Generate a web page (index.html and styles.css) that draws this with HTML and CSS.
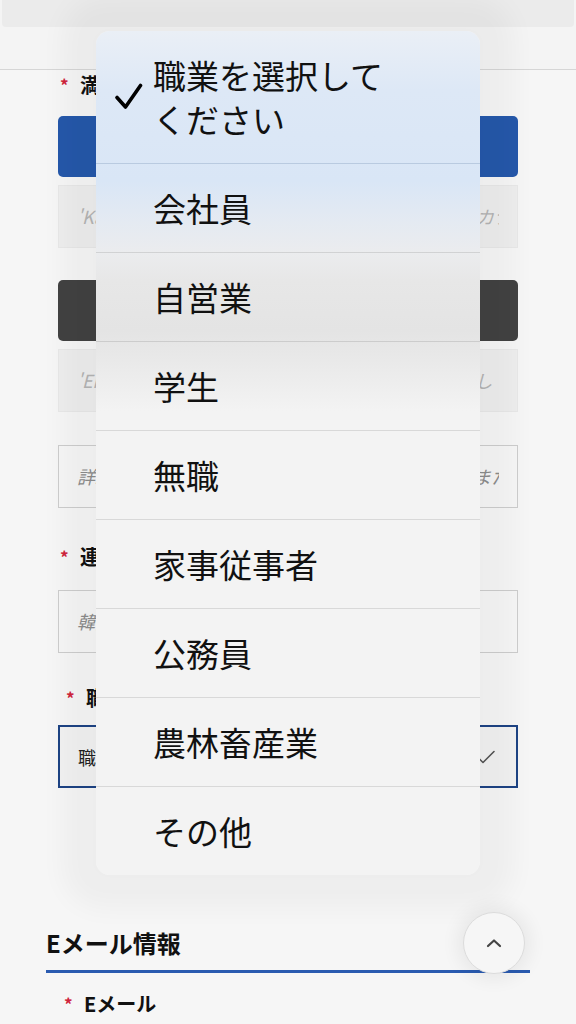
FILE: index.html
```html
<!DOCTYPE html>
<html lang="ja">
  <head>
    <meta charset="UTF-8" />
    <meta name="viewport" content="width=device-width, initial-scale=1.0" />
    <title>会員情報入力</title>
    <link rel="stylesheet" href="styles.css">
  </head>

  <body>
    <header class="top-bar">
      <div class="top-strip"></div>
    </header>

    <main class="form">
      <div class="field-label first"><span class="req">*</span>満年齢・住所</div>
      <button class="btn btn-blue" type="button">郵便番号から住所を検索</button>
      <div class="input input-readonly"><span>'Kana' 全角カタカナで住所を検索後に自動でカタカナ入力</span></div>
      <button class="btn btn-dark" type="button">英文住所に変換</button>
      <div class="input input-readonly"><span>'English' 英文住所が自動で入力されます。変更なし</span></div>
      <div class="input input-line"><span>詳細住所（番地・建物名・部屋番号）を入力し、または</span></div>

      <div class="field-label mid"><span class="req">*</span>連絡先電話番号</div>
      <div class="input input-line line-2"><span>韓国の電話番号を入力してください</span></div>

      <div class="field-label job"><span class="req">*</span>職業</div>
      <div class="select">
        <span>職業を選択してください</span>
        <svg class="select-check" width="18" height="14" viewBox="0 0 18 14">
          <path d="M1 7.5 L6 12.5 L17 1.5" fill="none" stroke="#555" stroke-width="1.6" stroke-linecap="round" stroke-linejoin="round" />
        </svg>
      </div>
    </main>

    <section class="email">
      <h2 class="section-title">Eメール情報</h2>
      <div class="field-label"><span class="req">*</span>Eメール</div>
    </section>

    <!-- iOS風の選択肢ポップアップ -->
    <div class="picker">
      <div class="option selected">
        <svg class="check" width="30" height="30" viewBox="0 0 30 30">
          <path d="M2 15.5 L10.5 25 L25.5 3.5" fill="none" stroke="#000" stroke-width="3.6" stroke-linecap="round" stroke-linejoin="round" />
        </svg>
        <span>職業を選択してください</span>
      </div>
      <div class="option"><i></i><span>会社員</span></div>
      <div class="option"><i></i><span>自営業</span></div>
      <div class="option"><i></i><span>学生</span></div>
      <div class="option"><i></i><span>無職</span></div>
      <div class="option"><i></i><span>家事従事者</span></div>
      <div class="option"><i></i><span>公務員</span></div>
      <div class="option"><i></i><span>農林畜産業</span></div>
      <div class="option"><i></i><span>その他</span></div>
    </div>

    <button class="to-top" type="button">
      <svg width="16" height="10" viewBox="0 0 16 10">
        <path d="M2 8 L8 2.5 L14 8" fill="none" stroke="#444" stroke-width="2.2" stroke-linecap="round" stroke-linejoin="round" />
      </svg>
    </button>
  </body>
</html>
```

FILE: styles.css
```css
body {
    margin: 0;
    padding: 0;
    width: 576px;
    height: 1024px;
    overflow: hidden;
    position: relative;
    background-color: #f6f6f6;
    color: #111;
    font-family: "Noto Sans CJK JP", "Noto Sans", sans-serif;
}

.top-bar {
    height: 69px;
    padding: 0 2px;
    background-color: #f4f4f4;
    border-bottom: 1px solid #d6d6d6;
}

.top-strip {
    height: 27px;
    background-color: #ebebeb;
    border-radius: 0 0 4px 4px;
}

.form {
    padding: 0 58px;
}

.field-label {
    display: flex;
    align-items: center;
    height: 28px;
    line-height: 28px;
    padding-left: 2px;
    font-size: 20px;
    font-weight: bold;
}

.req {
    width: 20px;
    color: #d0243c;
    font-size: 17px;
}

.field-label.first {
    margin-top: 1px;
}

.field-label.mid {
    margin-top: 35px;
}

.field-label.job {
    margin-top: 31px;
    padding-left: 8px;
}

.btn {
    display: block;
    width: 100%;
    height: 61px;
    border: none;
    border-radius: 5px;
    color: white;
    font-family: inherit;
    font-size: 18px;
    font-weight: bold;
}

.btn-blue {
    margin-top: 17px;
    background-color: #2558aa;
}

.btn-dark {
    margin-top: 32px;
    background-color: #424242;
}

.input {
    box-sizing: border-box;
    height: 63px;
    padding: 0 18px;
    line-height: 61px;
    font-size: 18px;
    font-style: italic;
    color: #a8a8a8;
    white-space: nowrap;
}

.input span {
    display: block;
    overflow: hidden;
}

.input-readonly {
    margin-top: 8px;
    background-color: #eeeeee;
    border: 1px solid #e8e8e8;
    color: #b4b4b4;
}

.input-line {
    margin-top: 33px;
    background-color: #f6f6f6;
    border: 1px solid #cdcdcd;
    color: #8c8c8c;
}

.input-line.line-2 {
    margin-top: 19px;
}

.select {
    box-sizing: border-box;
    display: flex;
    align-items: center;
    justify-content: space-between;
    height: 63px;
    margin-top: 13px;
    padding: 0 21px 0 18px;
    background-color: #f2f2f2;
    border: 2px solid #1d4384;
    font-size: 18px;
    color: #222;
    white-space: nowrap;
}

.email {
    margin-top: 141px;
    padding: 0 46px;
}

.section-title {
    margin: 0;
    padding-bottom: 13px;
    line-height: 28px;
    font-size: 24px;
    font-weight: bold;
    border-bottom: 3px solid #2a5bb0;
}

.email .field-label {
    margin-top: 17px;
    padding-left: 18px;
}

.picker {
    position: absolute;
    left: 96px;
    top: 31px;
    width: 384px;
    border-radius: 14px;
    overflow: hidden;
    box-shadow: 0 0 26px 34px rgba(0, 0, 0, 0.035);
    background: linear-gradient(
        to bottom,
        #eaeff6 0px,
        #dde8f6 60px,
        #d9e6f6 150px,
        #e4eaf2 190px,
        #ebecee 222px,
        #e7e7e7 250px,
        #e4e4e4 300px,
        #e9e9e9 330px,
        #f3f3f3 380px,
        #f3f3f3 100%
    );
}

.option {
    display: grid;
    grid-template-columns: 57px 1fr;
    align-items: center;
    padding: 22px 80px 22px 0;
    font-size: 33px;
    line-height: 44px;
    color: #111;
    border-bottom: 1px solid rgba(0, 0, 0, 0.11);
}

.option:last-child {
    border-bottom: none;
}

.option.selected {
    border-bottom-color: rgba(40, 80, 130, 0.18);
}

.check {
    margin-left: 19px;
}

.to-top {
    position: absolute;
    left: 463px;
    top: 912px;
    width: 62px;
    height: 62px;
    padding: 0;
    display: flex;
    align-items: center;
    justify-content: center;
    border-radius: 50%;
    border: 1px solid #dcdcdc;
    background-color: #f6f6f6;
    box-shadow: 0 0 18px 6px rgba(0, 0, 0, 0.06);
}
```
